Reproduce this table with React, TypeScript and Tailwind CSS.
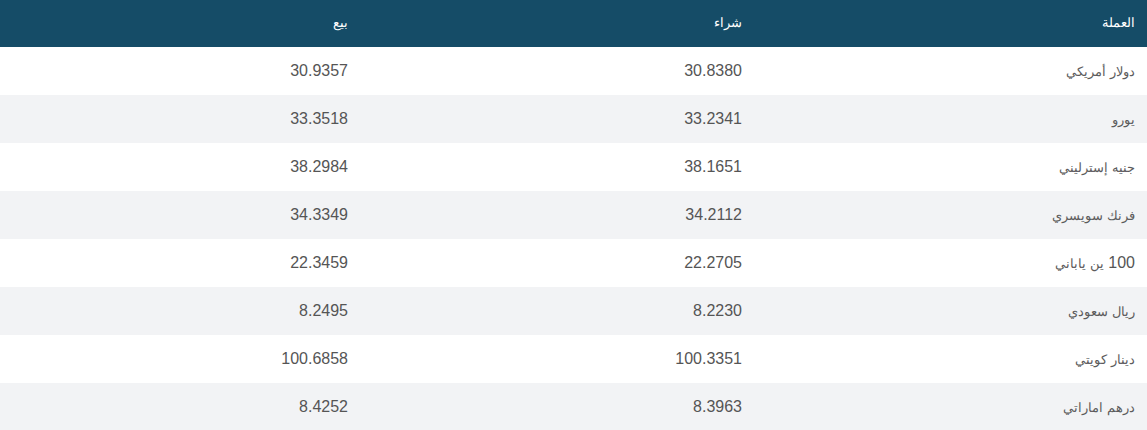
const rows = [
  { name: "دولار أمريكي", buy: "30.8380", sell: "30.9357" },
  { name: "يورو", buy: "33.2341", sell: "33.3518" },
  { name: "جنيه إسترليني", buy: "38.1651", sell: "38.2984" },
  { name: "فرنك سويسري", buy: "34.2112", sell: "34.3349" },
  { name: "ين ياباني", qty: "100", buy: "22.2705", sell: "22.3459" },
  { name: "ريال سعودي", buy: "8.2230", sell: "8.2495" },
  { name: "دينار كويتي", buy: "100.3351", sell: "100.6858" },
  { name: "درهم اماراتي", buy: "8.3963", sell: "8.4252" },
];

export default function App() {
  return (
    <div dir="rtl" className="w-[1147px] bg-white font-['Liberation_Sans',sans-serif]">
      <div className="grid grid-cols-[393px_394px_360px] h-[47px] bg-[#154c67] text-white text-[12.5px] items-center">
        <div className="pr-3">العملة</div>
        <div className="pr-3">شراء</div>
        <div className="pr-3">بيع</div>
      </div>
      {rows.map((r, i) => (
        <div
          key={r.name}
          className={`grid grid-cols-[393px_394px_360px] h-[48px] items-center text-[#555555] text-[16px] ${
            i % 2 === 1 ? "bg-[#f2f3f5]" : "bg-white"
          }`}
        >
          <div className="pr-3">
            {r.qty && <span>{r.qty} </span>}
            <span className="text-[13px] text-[#5c5c5c]">{r.name}</span>
          </div>
          <div className="pr-3">{r.buy}</div>
          <div className="pr-3">{r.sell}</div>
        </div>
      ))}
    </div>
  );
}
